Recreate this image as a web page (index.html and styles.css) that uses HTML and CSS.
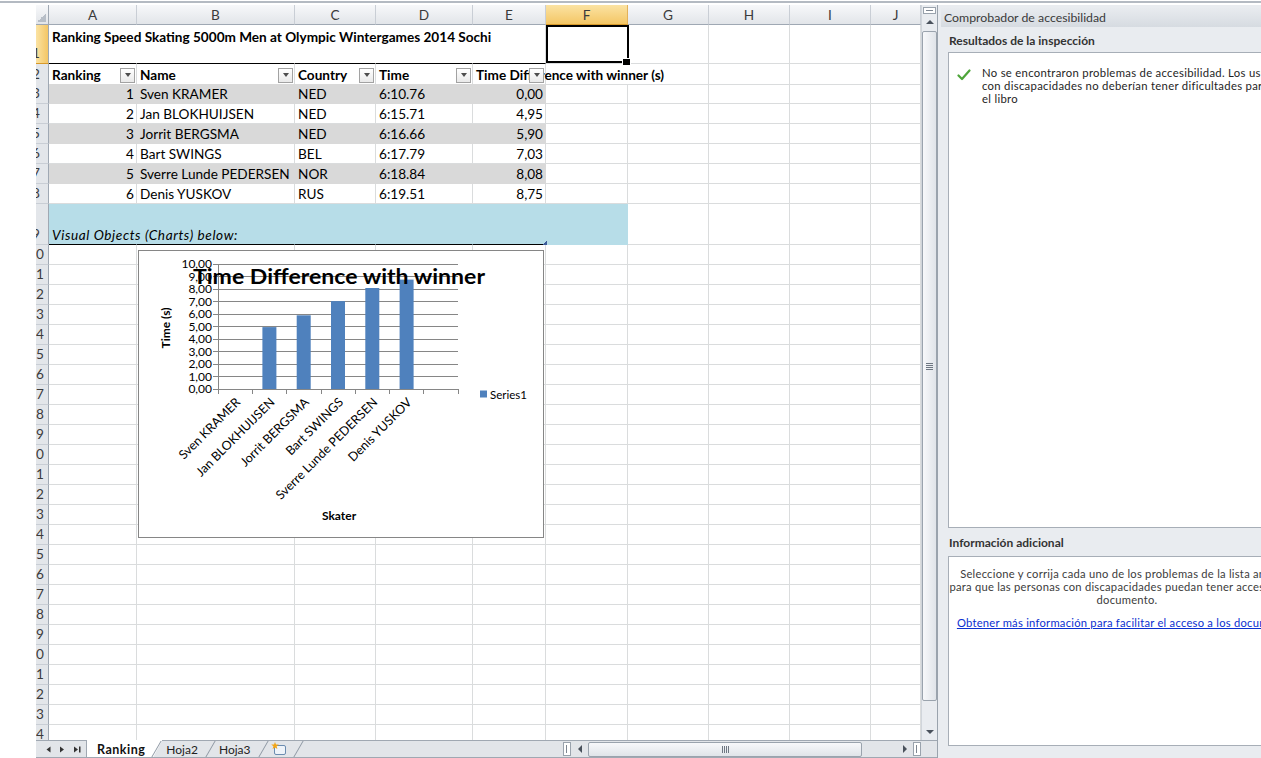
FILE: index.html
```html
<!DOCTYPE html>
<html lang="es">
<head>
<meta charset="utf-8">
<title>Ranking</title>
<link rel="stylesheet" href="styles.css">
</head>
<body>
<div class="app">
 <div class="topstrip"></div>
 <div class="main">
  <div class="gutter"></div>
  <div class="workbook">
   <div class="sheetrow">
    <div class="grid">
     <div class="r hdr">
      <div class="corner"></div>
      <div class="ch">A</div><div class="ch">B</div><div class="ch">C</div><div class="ch">D</div><div class="ch">E</div><div class="ch on">F</div><div class="ch">G</div><div class="ch">H</div><div class="ch">I</div><div class="ch">J</div>
     </div>
     <div class="r r39">
      <div class="rh on"><span>1</span></div>
      <div class="c title nr bb">Ranking Speed Skating 5000m Men at Olympic Wintergames 2014 Sochi</div>
      <div class="c nr bb"></div><div class="c nr bb"></div><div class="c nr bb"></div><div class="c bb"></div>
      <div class="c selcell"></div>
      <div class="c"></div><div class="c"></div><div class="c"></div><div class="c"></div>
     </div>
     <div class="r">
      <div class="rh"><span>2</span></div>
      <div class="c th bb"><span class="t">Ranking</span><i class="fb"></i></div>
      <div class="c th bb"><span class="t">Name</span><i class="fb"></i></div>
      <div class="c th bb"><span class="t">Country</span><i class="fb"></i></div>
      <div class="c th bb"><span class="t">Time</span><i class="fb"></i></div>
      <div class="c th bb"><span class="t">Time Difference with winner (s)</span><i class="fb"></i></div>
      <div class="c nr"></div><div class="c"></div><div class="c"></div><div class="c"></div><div class="c"></div>
     </div>
     <div class="r sh">
      <div class="rh"><span>3</span></div>
      <div class="c n">1</div><div class="c">Sven KRAMER</div><div class="c">NED</div><div class="c">6:10.76</div><div class="c n">0,00</div>
      <div class="c"></div><div class="c"></div><div class="c"></div><div class="c"></div><div class="c"></div>
     </div>
     <div class="r">
      <div class="rh"><span>4</span></div>
      <div class="c n">2</div><div class="c">Jan BLOKHUIJSEN</div><div class="c">NED</div><div class="c">6:15.71</div><div class="c n">4,95</div>
      <div class="c"></div><div class="c"></div><div class="c"></div><div class="c"></div><div class="c"></div>
     </div>
     <div class="r sh">
      <div class="rh"><span>5</span></div>
      <div class="c n">3</div><div class="c">Jorrit BERGSMA</div><div class="c">NED</div><div class="c">6:16.66</div><div class="c n">5,90</div>
      <div class="c"></div><div class="c"></div><div class="c"></div><div class="c"></div><div class="c"></div>
     </div>
     <div class="r">
      <div class="rh"><span>6</span></div>
      <div class="c n">4</div><div class="c">Bart SWINGS</div><div class="c">BEL</div><div class="c">6:17.79</div><div class="c n">7,03</div>
      <div class="c"></div><div class="c"></div><div class="c"></div><div class="c"></div><div class="c"></div>
     </div>
     <div class="r sh">
      <div class="rh"><span>7</span></div>
      <div class="c n">5</div><div class="c">Sverre Lunde PEDERSEN</div><div class="c">NOR</div><div class="c">6:18.84</div><div class="c n">8,08</div>
      <div class="c"></div><div class="c"></div><div class="c"></div><div class="c"></div><div class="c"></div>
     </div>
     <div class="r">
      <div class="rh"><span>8</span></div>
      <div class="c n">6</div><div class="c">Denis YUSKOV</div><div class="c">RUS</div><div class="c">6:19.51</div><div class="c n">8,75</div>
      <div class="c"></div><div class="c"></div><div class="c"></div><div class="c"></div><div class="c"></div>
     </div>
     <div class="r r41 blue">
      <div class="rh"><span>9</span></div>
      <div class="c note bb">Visual Objects (Charts) below:</div><div class="c bb"></div><div class="c bb"></div><div class="c bb"></div><div class="c bb handle"></div>
      <div class="c"></div><div class="c"></div><div class="c"></div><div class="c"></div><div class="c"></div>
     </div>
     <div class="r"><div class="rh"><span>10</span></div><div class="c"></div><div class="c"></div><div class="c"></div><div class="c"></div><div class="c"></div><div class="c"></div><div class="c"></div><div class="c"></div><div class="c"></div><div class="c"></div></div>
     <div class="r"><div class="rh"><span>11</span></div><div class="c"></div><div class="c"></div><div class="c"></div><div class="c"></div><div class="c"></div><div class="c"></div><div class="c"></div><div class="c"></div><div class="c"></div><div class="c"></div></div>
     <div class="r"><div class="rh"><span>12</span></div><div class="c"></div><div class="c"></div><div class="c"></div><div class="c"></div><div class="c"></div><div class="c"></div><div class="c"></div><div class="c"></div><div class="c"></div><div class="c"></div></div>
     <div class="r"><div class="rh"><span>13</span></div><div class="c"></div><div class="c"></div><div class="c"></div><div class="c"></div><div class="c"></div><div class="c"></div><div class="c"></div><div class="c"></div><div class="c"></div><div class="c"></div></div>
     <div class="r"><div class="rh"><span>14</span></div><div class="c"></div><div class="c"></div><div class="c"></div><div class="c"></div><div class="c"></div><div class="c"></div><div class="c"></div><div class="c"></div><div class="c"></div><div class="c"></div></div>
     <div class="r"><div class="rh"><span>15</span></div><div class="c"></div><div class="c"></div><div class="c"></div><div class="c"></div><div class="c"></div><div class="c"></div><div class="c"></div><div class="c"></div><div class="c"></div><div class="c"></div></div>
     <div class="r"><div class="rh"><span>16</span></div><div class="c"></div><div class="c"></div><div class="c"></div><div class="c"></div><div class="c"></div><div class="c"></div><div class="c"></div><div class="c"></div><div class="c"></div><div class="c"></div></div>
     <div class="r"><div class="rh"><span>17</span></div><div class="c"></div><div class="c"></div><div class="c"></div><div class="c"></div><div class="c"></div><div class="c"></div><div class="c"></div><div class="c"></div><div class="c"></div><div class="c"></div></div>
     <div class="r"><div class="rh"><span>18</span></div><div class="c"></div><div class="c"></div><div class="c"></div><div class="c"></div><div class="c"></div><div class="c"></div><div class="c"></div><div class="c"></div><div class="c"></div><div class="c"></div></div>
     <div class="r"><div class="rh"><span>19</span></div><div class="c"></div><div class="c"></div><div class="c"></div><div class="c"></div><div class="c"></div><div class="c"></div><div class="c"></div><div class="c"></div><div class="c"></div><div class="c"></div></div>
     <div class="r"><div class="rh"><span>20</span></div><div class="c"></div><div class="c"></div><div class="c"></div><div class="c"></div><div class="c"></div><div class="c"></div><div class="c"></div><div class="c"></div><div class="c"></div><div class="c"></div></div>
     <div class="r"><div class="rh"><span>21</span></div><div class="c"></div><div class="c"></div><div class="c"></div><div class="c"></div><div class="c"></div><div class="c"></div><div class="c"></div><div class="c"></div><div class="c"></div><div class="c"></div></div>
     <div class="r"><div class="rh"><span>22</span></div><div class="c"></div><div class="c"></div><div class="c"></div><div class="c"></div><div class="c"></div><div class="c"></div><div class="c"></div><div class="c"></div><div class="c"></div><div class="c"></div></div>
     <div class="r"><div class="rh"><span>23</span></div><div class="c"></div><div class="c"></div><div class="c"></div><div class="c"></div><div class="c"></div><div class="c"></div><div class="c"></div><div class="c"></div><div class="c"></div><div class="c"></div></div>
     <div class="r"><div class="rh"><span>24</span></div><div class="c"></div><div class="c"></div><div class="c"></div><div class="c"></div><div class="c"></div><div class="c"></div><div class="c"></div><div class="c"></div><div class="c"></div><div class="c"></div></div>
     <div class="r"><div class="rh"><span>25</span></div><div class="c"></div><div class="c"></div><div class="c"></div><div class="c"></div><div class="c"></div><div class="c"></div><div class="c"></div><div class="c"></div><div class="c"></div><div class="c"></div></div>
     <div class="r"><div class="rh"><span>26</span></div><div class="c"></div><div class="c"></div><div class="c"></div><div class="c"></div><div class="c"></div><div class="c"></div><div class="c"></div><div class="c"></div><div class="c"></div><div class="c"></div></div>
     <div class="r"><div class="rh"><span>27</span></div><div class="c"></div><div class="c"></div><div class="c"></div><div class="c"></div><div class="c"></div><div class="c"></div><div class="c"></div><div class="c"></div><div class="c"></div><div class="c"></div></div>
     <div class="r"><div class="rh"><span>28</span></div><div class="c"></div><div class="c"></div><div class="c"></div><div class="c"></div><div class="c"></div><div class="c"></div><div class="c"></div><div class="c"></div><div class="c"></div><div class="c"></div></div>
     <div class="r"><div class="rh"><span>29</span></div><div class="c"></div><div class="c"></div><div class="c"></div><div class="c"></div><div class="c"></div><div class="c"></div><div class="c"></div><div class="c"></div><div class="c"></div><div class="c"></div></div>
     <div class="r"><div class="rh"><span>30</span></div><div class="c"></div><div class="c"></div><div class="c"></div><div class="c"></div><div class="c"></div><div class="c"></div><div class="c"></div><div class="c"></div><div class="c"></div><div class="c"></div></div>
     <div class="r"><div class="rh"><span>31</span></div><div class="c"></div><div class="c"></div><div class="c"></div><div class="c"></div><div class="c"></div><div class="c"></div><div class="c"></div><div class="c"></div><div class="c"></div><div class="c"></div></div>
     <div class="r"><div class="rh"><span>32</span></div><div class="c"></div><div class="c"></div><div class="c"></div><div class="c"></div><div class="c"></div><div class="c"></div><div class="c"></div><div class="c"></div><div class="c"></div><div class="c"></div></div>
     <div class="r"><div class="rh"><span>33</span></div><div class="c"></div><div class="c"></div><div class="c"></div><div class="c"></div><div class="c"></div><div class="c"></div><div class="c"></div><div class="c"></div><div class="c"></div><div class="c"></div></div>
     <div class="r"><div class="rh"><span>34</span></div><div class="c"></div><div class="c"></div><div class="c"></div><div class="c"></div><div class="c"></div><div class="c"></div><div class="c"></div><div class="c"></div><div class="c"></div><div class="c"></div></div>

     <div class="chart">
      <svg class="chartsvg" width="404" height="286" viewBox="0 0 404 286">
       <g stroke="#868686" stroke-width="1">
        <line x1="79" y1="13.5" x2="319" y2="13.5"/>
        <line x1="79" y1="25.5" x2="319" y2="25.5"/>
        <line x1="79" y1="38.5" x2="319" y2="38.5"/>
        <line x1="79" y1="50.5" x2="319" y2="50.5"/>
        <line x1="79" y1="63.5" x2="319" y2="63.5"/>
        <line x1="79" y1="75.5" x2="319" y2="75.5"/>
        <line x1="79" y1="88.5" x2="319" y2="88.5"/>
        <line x1="79" y1="100.5" x2="319" y2="100.5"/>
        <line x1="79" y1="113.5" x2="319" y2="113.5"/>
        <line x1="79" y1="125.5" x2="319" y2="125.5"/>
        <line x1="74" y1="138.5" x2="319.5" y2="138.5"/>
        <line x1="79.5" y1="13" x2="79.5" y2="143"/>
        <line x1="74" y1="13.5" x2="79" y2="13.5"/>
        <line x1="74" y1="25.5" x2="79" y2="25.5"/>
        <line x1="74" y1="38.5" x2="79" y2="38.5"/>
        <line x1="74" y1="50.5" x2="79" y2="50.5"/>
        <line x1="74" y1="63.5" x2="79" y2="63.5"/>
        <line x1="74" y1="75.5" x2="79" y2="75.5"/>
        <line x1="74" y1="88.5" x2="79" y2="88.5"/>
        <line x1="74" y1="100.5" x2="79" y2="100.5"/>
        <line x1="74" y1="113.5" x2="79" y2="113.5"/>
        <line x1="74" y1="125.5" x2="79" y2="125.5"/>
        <line x1="113.5" y1="138" x2="113.5" y2="143"/>
        <line x1="147.5" y1="138" x2="147.5" y2="143"/>
        <line x1="182.5" y1="138" x2="182.5" y2="143"/>
        <line x1="216.5" y1="138" x2="216.5" y2="143"/>
        <line x1="250.5" y1="138" x2="250.5" y2="143"/>
        <line x1="284.5" y1="138" x2="284.5" y2="143"/>
        <line x1="319.5" y1="138" x2="319.5" y2="143"/>
       </g>
       <g fill="#4f81bd">
        <rect x="123.4" y="76.1" width="14" height="61.9"/>
        <rect x="157.7" y="64.3" width="14" height="73.7"/>
        <rect x="192" y="50.1" width="14" height="87.9"/>
        <rect x="226.3" y="37" width="14" height="101"/>
        <rect x="260.6" y="28.6" width="14" height="109.4"/>
       </g>
       <g class="ylab" text-anchor="end">
        <text x="73" y="17.3">10,00</text>
        <text x="73" y="29.8">9,00</text>
        <text x="73" y="42.3">8,00</text>
        <text x="73" y="54.8">7,00</text>
        <text x="73" y="67.3">6,00</text>
        <text x="73" y="79.8">5,00</text>
        <text x="73" y="92.3">4,00</text>
        <text x="73" y="104.8">3,00</text>
        <text x="73" y="117.3">2,00</text>
        <text x="73" y="129.8">1,00</text>
        <text x="73" y="142.3">0,00</text>
       </g>
       <g class="xlab" text-anchor="end">
        <text x="102.1" y="152" transform="rotate(-45 102.1 152)">Sven KRAMER</text>
        <text x="136.4" y="152" transform="rotate(-45 136.4 152)">Jan BLOKHUIJSEN</text>
        <text x="170.7" y="152" transform="rotate(-45 170.7 152)">Jorrit BERGSMA</text>
        <text x="205" y="152" transform="rotate(-45 205 152)">Bart SWINGS</text>
        <text x="239.3" y="152" transform="rotate(-45 239.3 152)">Sverre Lunde PEDERSEN</text>
        <text x="273.6" y="152" transform="rotate(-45 273.6 152)">Denis YUSKOV</text>
       </g>
       <text class="atitle" x="31" y="77" text-anchor="middle" transform="rotate(-90 31 77)">Time (s)</text>
       <text class="atitle" x="200" y="268.5" text-anchor="middle">Skater</text>
       <rect x="341" y="139.5" width="7" height="7" fill="#4f81bd"/>
       <text class="legend" x="351" y="148.3">Series1</text>
       <text class="ctitle" x="200" y="33" text-anchor="middle" textLength="292" lengthAdjust="spacingAndGlyphs">Time Difference with winner</text>
      </svg>
     </div>
    </div>
    <div class="vscroll">
     <div class="vsplit"></div>
     <div class="varrow up"></div>
     <div class="vtrack"><div class="vthumb"><span class="vgrip"></span></div></div>
     <div class="varrow down"></div>
    </div>
   </div>
   <div class="tabbar">
    <div class="tabnav">
     <svg width="50" height="16" viewBox="0 0 50 16">
      <polygon points="14.5,5.5 14.5,11.5 10.5,8.5" fill="#333"/>
      <polygon points="24,5.5 24,11.5 28,8.5" fill="#333"/>
      <polygon points="38,5.5 38,11.5 42,8.5" fill="#333"/>
      <rect x="43" y="5.5" width="1.5" height="6" fill="#333"/>
     </svg>
    </div>
    <div class="tabs">
     <div class="tab active">Ranking</div>
     <div class="tab t2">Hoja2</div>
     <div class="tab t3">Hoja3</div>
     <div class="tab newtab">
      <svg width="17" height="14" viewBox="0 0 17 14">
       <rect x="3.5" y="3.5" width="11" height="9" rx="1.5" fill="#eef3f9" stroke="#6b8cb0"/>
       <polygon points="4,0 5,2.5 7.8,2.6 5.6,4.3 6.4,7 4,5.4 1.6,7 2.4,4.3 0.2,2.6 3,2.5" fill="#f2a516"/>
      </svg>
     </div>
    </div>
    <div class="spacer"></div>
    <div class="hscroll">
     <div class="hsplit"></div>
     <div class="harrow left"></div>
     <div class="hthumb"><span class="hgrip"></span></div>
     <div class="htrack"></div>
     <div class="harrow right"></div>
     <div class="hsplit"></div>
    </div>
    <div class="sbcorner"></div>
   </div>
  </div>
  <div class="panel">
   <div class="phead">Comprobador de accesibilidad</div>
   <div class="pbody">
    <div class="plabel">Resultados de la inspección</div>
    <div class="pbox results">
     <div class="okrow">
      <svg class="check" width="14" height="12" viewBox="0 0 14 12">
       <path d="M1.5 6.5 L5 10 L12.5 1.5" fill="none" stroke="#4ea53a" stroke-width="2.2" stroke-linecap="round" stroke-linejoin="round"/>
      </svg>
      <p>No se encontraron problemas de accesibilidad. Los usuarios<br>con discapacidades no deberían tener dificultades para leer<br>el libro</p>
     </div>
    </div>
    <div class="plabel second">Información adicional</div>
    <div class="pbox info">
     <p>Seleccione y corrija cada uno de los problemas de la lista anterior<br>para que las personas con discapacidades puedan tener acceso a este<br>documento.</p>
     <a class="plink" href="#">Obtener más información para facilitar el acceso a los documentos</a>
    </div>
   </div>
  </div>
 </div>
</div>
</body>
</html>
```
FILE: styles.css
```css
*{box-sizing:border-box;margin:0;padding:0}
html,body{width:1261px;height:758px;overflow:hidden;background:#fff}
body{font-family:Lato,"Liberation Sans",sans-serif;color:#000}
.app{width:1261px;height:758px;display:flex;flex-direction:column;overflow:hidden}
.topstrip{flex:none;height:5px;background:linear-gradient(#fff 0,#fff 1px,#b4bac2 1px,#b4bac2 3px,#fff 3px)}
.main{flex:1;display:flex;min-height:0}
.gutter{flex:none;width:36px;background:#fff}
.workbook{flex:none;width:901px;display:flex;flex-direction:column}
.sheetrow{flex:none;height:735px;display:flex}

/* grid */
.grid{flex:none;width:885px;height:735px;overflow:hidden;position:relative;font-size:13.6px;background:#fff}
.r{display:grid;grid-template-columns:13px 88px 158px 81px 97px 73px 82px 81px 81px 81px 50px;height:20px}
.r39{height:39px}
.r41{height:41px}
.ch{background:linear-gradient(#f7f8fa,#e2e5e9);border-right:1px solid #c9ced5;border-bottom:1px solid #9fa8b3;text-align:center;line-height:18px;padding-top:1px;color:#3b3b3b}
.ch.on{background:linear-gradient(#fbe3a3,#f4c665);border-right-color:#e2b15a;border-bottom-color:#d89a2a}
.corner{background:linear-gradient(#f7f8fa,#e2e5e9);border-right:1px solid #9fa8b3;border-bottom:1px solid #9fa8b3;position:relative}
.corner::after{content:"";position:absolute;right:2px;bottom:2px;width:9px;height:9px;background:linear-gradient(135deg,transparent 50%,#b7bec7 50%)}
.rh{background:#e3e6ea;border-right:1px solid #9fa8b3;border-bottom:1px solid #c9ced5;overflow:hidden;display:flex;align-items:flex-end;color:#3b3b3b}
.rh span{flex:none;width:26px;margin-left:-13px;text-align:center;line-height:19px}
.rh.on{background:linear-gradient(90deg,#fbe3a3,#f4c665);border-bottom-color:#d89a2a}
.c{border-right:1px solid #dadcdd;border-bottom:1px solid #dadcdd;padding:0 2px 0 3px;display:flex;align-items:flex-end;white-space:nowrap;line-height:18px;min-width:0}
.c.n{justify-content:flex-end}
.c.nr{border-right-color:transparent}
.c.bb{border-bottom-color:#000}
.title{font-weight:700;align-items:flex-start;padding-top:3px;position:relative;z-index:1}
.th{font-weight:700;align-items:center;padding-right:1px}
.th .t{flex:1 1 0;min-width:0;line-height:18px;padding-top:2px}
.fb{flex:none;width:15px;height:15px;border:1px solid #a2a2a2;background:linear-gradient(#fff,#e9e9e9);display:flex;align-items:center;justify-content:center;margin-top:2px}
.fb::after{content:"";border-left:3.5px solid transparent;border-right:3.5px solid transparent;border-top:4px solid #4d4d4d}
.sh>.c:nth-child(-n+6){background:#d9d9d9;border-color:#d9d9d9}
.blue>.c:nth-child(-n+7){background:#b7dde8;border-right-color:#b7dde8;border-bottom-color:#b7dde8}
.blue>.c.bb{border-bottom-color:#000}
.note{font-style:italic;letter-spacing:0.6px;position:relative;z-index:1}
.handle{position:relative}
.handle::after{content:"";position:absolute;right:-2px;bottom:-1px;width:4px;height:4px;background:linear-gradient(135deg,transparent 50%,#3d5c99 50%)}
.selcell{position:relative;z-index:3;border-right-color:transparent}
.selcell::before{content:"";position:absolute;left:0;top:0;right:-2px;bottom:0;border:2px solid #000}
.selcell::after{content:"";position:absolute;right:-4px;bottom:-3px;width:7px;height:6px;background:#000;border:1px solid #fff}

/* chart */
.chart{position:absolute;left:102px;top:245px;width:406px;height:288px;border:1px solid #868686;background:#fff;z-index:4}
.chartsvg{display:block}
.chartsvg text{font-family:Lato,"Liberation Sans",sans-serif;fill:#000}
.ylab text{font-size:12px}
.xlab text{font-size:12.5px}
.atitle{font-size:12px;font-weight:700}
.legend{font-size:11.5px}
.ctitle{font-size:21.5px;font-weight:700}

/* vertical scrollbar */
.vscroll{flex:none;width:16px;background:#e9ecf0;border-left:1px solid #d0d5db;display:flex;flex-direction:column;align-items:center}
.vsplit{flex:none;width:13px;height:7px;margin-top:2px;border:1px solid #9aa3ad;background:#fff;position:relative}
.vsplit::after{content:"";position:absolute;left:2px;right:2px;top:2px;height:1px;background:#7d8691}
.varrow{flex:none;height:16px;width:100%;display:flex;align-items:center;justify-content:center}
.varrow.up::after{content:"";border-left:4px solid transparent;border-right:4px solid transparent;border-bottom:4px solid #4a525c}
.varrow.down::after{content:"";border-left:4px solid transparent;border-right:4px solid transparent;border-top:4px solid #4a525c}
.vtrack{flex:1;width:100%;padding:1px 0 23px 0}
.vthumb{height:100%;border:1px solid #9aa3ad;border-radius:2px;background:linear-gradient(90deg,#f7f8fa,#e0e4e9);display:flex;align-items:center;justify-content:center}
.vgrip{width:7px;height:7px;background:repeating-linear-gradient(#6e7782 0 1px,transparent 1px 2px)}

/* tab bar */
.tabbar{flex:none;height:18px;display:flex;background:#e2e5e9;border-top:1px solid #a0a8b2;border-bottom:1px solid #a0a8b2;font-size:12px;color:#222}
.tabnav{flex:none;width:51px;border-right:1px solid #a0a8b2;display:flex;align-items:center}
.tabnav svg{display:block}
.tabs{flex:none;display:flex;height:100%}
.tab{position:relative;z-index:0;display:flex;align-items:center;height:100%;white-space:nowrap}
.tab::after{content:"";position:absolute;right:-5px;top:0;bottom:0;width:1px;background:#8d97a3;transform:skewX(-30deg)}
.tab.active{font-weight:700;font-size:12.5px;letter-spacing:0.5px;padding:0 7px 0 10px;color:#111}
.tab.active::before{content:"";position:absolute;left:0;top:-1px;bottom:0;right:-10px;background:#fff;clip-path:polygon(0 0,100% 0,calc(100% - 9px) 100%,0 100%);z-index:-1}
.tab.t2{padding:0 8px 0 14px}
.tab.t3{padding:0 8px 0 13px}
.tab.newtab{padding:0 6px 0 12px}
.tab.newtab svg{display:block}
.spacer{flex:1}
.hscroll{flex:none;width:358px;height:100%;display:flex;align-items:center}
.hsplit{flex:none;width:8px;height:14px;border:1px solid #9aa3ad;background:#fff;position:relative}
.hsplit::after{content:"";position:absolute;left:2px;top:2px;bottom:2px;width:1px;background:#7d8691}
.harrow{flex:none;width:17px;height:100%;display:flex;align-items:center;justify-content:center}
.harrow.left::after{content:"";border-top:4px solid transparent;border-bottom:4px solid transparent;border-right:4px solid #4a525c}
.harrow.right::after{content:"";border-top:4px solid transparent;border-bottom:4px solid transparent;border-left:4px solid #4a525c}
.hthumb{flex:none;width:274px;height:15px;border:1px solid #9aa3ad;border-radius:2px;background:linear-gradient(#f7f8fa,#e0e4e9);display:flex;align-items:center;justify-content:center}
.hgrip{width:7px;height:7px;background:repeating-linear-gradient(90deg,#6e7782 0 1px,transparent 1px 2px)}
.htrack{flex:1}
.sbcorner{flex:none;width:16px;background:#e2e5e9}

/* task pane */
.panel{flex:none;width:377px;background:#e9ecf0;border-left:1px solid #9aa3ad;padding-top:3px;display:flex;flex-direction:column;color:#2b2b2b}
.phead{flex:none;margin-left:3px;height:19px;line-height:19px;padding-left:3px;font-size:12.3px;background:linear-gradient(#e8ebef,#d6dbe1);color:#3a3a3a;white-space:nowrap}
.pbody{flex:1;padding:0 8px 0 10px;display:flex;flex-direction:column}
.plabel{flex:none;height:25px;padding:6px 0 0 1px;font-size:12px;line-height:16px;font-weight:700;color:#333;white-space:nowrap}
.plabel.second{height:28px;padding-top:7px}
.pbox{flex:none;background:#fff;border:1px solid #a7aeb7}
.results{height:476px;padding:13px 0 0 8px}
.okrow{display:flex;align-items:flex-start}
.check{flex:none;display:block;margin-top:3px;margin-right:11px}
.okrow p{font-size:11.3px;letter-spacing:0.3px;line-height:13px;color:#1e1e1e;white-space:nowrap}
.info{height:190px;padding-top:10px;text-align:center;font-size:11.2px;letter-spacing:0.25px;line-height:13px;color:#3c3c3c;white-space:nowrap}
.plink{display:block;margin-top:10px;color:#0b2fd0;text-decoration:underline}
```
